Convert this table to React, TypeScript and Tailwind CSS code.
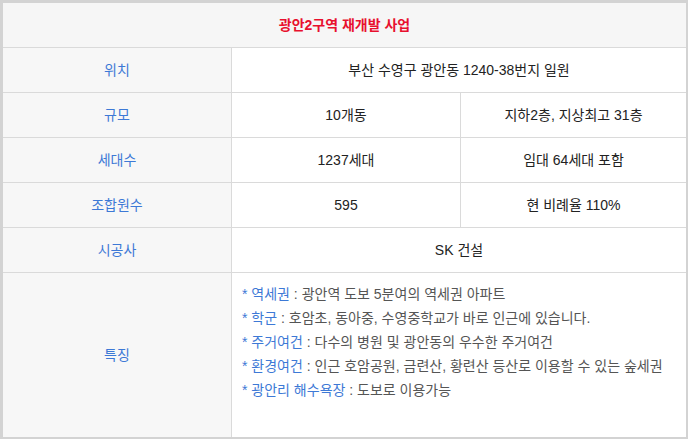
import React from "react";

const font = { fontFamily: '"Liberation Sans", "Noto Sans CJK KR", sans-serif' };

function Label({ children }: { children: React.ReactNode }) {
  return (
    <div className="w-[229px] shrink-0 border-r border-[#dadada] bg-[#f7f7f7] flex items-center justify-center text-[#3d79d6]">
      {children}
    </div>
  );
}

function Row({ label, a, b }: { label: string; a: string; b?: string }) {
  return (
    <div className="flex h-[45px] border-b border-[#dadada]">
      <Label>{label}</Label>
      {b === undefined ? (
        <div className="flex-1 flex items-center justify-center text-[#222]">{a}</div>
      ) : (
        <>
          <div className="w-[229px] shrink-0 border-r border-[#dadada] flex items-center justify-center text-[#222]">{a}</div>
          <div className="flex-1 flex items-center justify-center text-[#222]">{b}</div>
        </>
      )}
    </div>
  );
}

const features: [string, string][] = [
  ["역세권", "광안역 도보 5분여의 역세권 아파트"],
  ["학군", "호암초, 동아중, 수영중학교가 바로 인근에 있습니다."],
  ["주거여건", "다수의 병원 및 광안동의 우수한 주거여건"],
  ["환경여건", "인근 호암공원, 금련산, 황련산 등산로 이용할 수 있는 숲세권"],
  ["광안리 해수욕장", "도보로 이용가능"],
];

export default function App() {
  return (
    <div className="w-[690px] h-[440px] bg-white text-[14px]" style={font}>
      <div className="w-[688px] border-l-[3px] border-t-[3px] border-r-2 border-b-2 border-[#d3d3d3]">
        <div className="h-[45px] border-b border-[#dadada] bg-[#f6f6f6] flex items-center justify-center font-bold text-[#e8102e]">
          광안2구역 재개발 사업
        </div>
        <Row label="위치" a="부산 수영구 광안동 1240-38번지 일원" />
        <Row label="규모" a="10개동" b="지하2층, 지상최고 31층" />
        <Row label="세대수" a="1237세대" b="임대 64세대 포함" />
        <Row label="조합원수" a="595" b="현 비례율 110%" />
        <Row label="시공사" a="SK 건설" />
        <div className="flex h-[164px]">
          <Label>특징</Label>
          <div className="flex-1 pl-[10px] pt-[9px] text-[#555] leading-[24px]">
            {features.map(([k, v]) => (
              <div key={k}>
                <span className="text-[#3d79d6]">* {k}</span> : {v}
              </div>
            ))}
          </div>
        </div>
      </div>
    </div>
  );
}
